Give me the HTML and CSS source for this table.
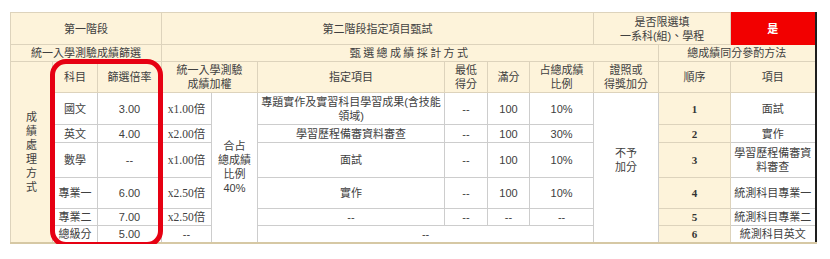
FILE: index.html
```html
<!DOCTYPE html>
<html lang="zh-Hant">
<head>
<meta charset="utf-8">
<title>甄選入學 評量方式</title>
<link rel="stylesheet" href="styles.css">
</head>
<body>
<div class="wrap">
  <table class="grid">
    <colgroup>
      <col class="w42"><col class="w45"><col class="w64"><col class="w50"><col class="w46"><col class="w187">
      <col class="w43"><col class="w42"><col class="w64"><col class="w65"><col class="w72"><col class="w85">
    </colgroup>
    <tr class="r1">
      <th colspan="3" class="hd">第一階段</th>
      <th colspan="6" class="hd">第二階段指定項目甄試</th>
      <th colspan="2" class="hd">是否限選填<br>一系科(組)、學程</th>
      <th class="yes">是</th>
    </tr>
    <tr class="r2">
      <th colspan="3" class="hd">統一入學測驗成績篩選</th>
      <th colspan="7" class="hd spaced">甄選總成績採計方式</th>
      <th colspan="2" class="hd">總成績同分參酌方法</th>
    </tr>
    <tr class="r3">
      <th rowspan="7" class="hd side">成<br>績<br>處<br>理<br>方<br>式</th>
      <th class="hd">科目</th>
      <th class="hd">篩選倍率</th>
      <th colspan="2" class="hd">統一入學測驗<br>成績加權</th>
      <th class="hd">指定項目</th>
      <th class="hd">最低<br>得分</th>
      <th class="hd">滿分</th>
      <th class="hd">占總成績<br>比例</th>
      <th class="hd">證照或<br>得獎加分</th>
      <th class="hd">順序</th>
      <th class="hd">項目</th>
    </tr>
    <tr class="d1">
      <td>國文</td><td>3.00</td><td class="serif">x1.00倍</td>
      <td rowspan="6">合占<br>總成績<br>比例<br>40%</td>
      <td class="nowrap">專題實作及實習科目學習成果(含技能<br>領域)</td>
      <td>--</td><td>100</td><td>10%</td>
      <td rowspan="6" class="lift">不予<br>加分</td>
      <td class="hd ord">1</td><td>面試</td>
    </tr>
    <tr class="d2">
      <td>英文</td><td>4.00</td><td class="serif">x2.00倍</td>
      <td>學習歷程備審資料審查</td>
      <td>--</td><td>100</td><td>30%</td>
      <td class="hd ord">2</td><td>實作</td>
    </tr>
    <tr class="d3">
      <td>數學</td><td>--</td><td class="serif">x1.00倍</td>
      <td>面試</td>
      <td>--</td><td>100</td><td>10%</td>
      <td class="hd ord">3</td><td>學習歷程備審資<br>料審查</td>
    </tr>
    <tr class="d4">
      <td>專業一</td><td>6.00</td><td class="serif">x2.50倍</td>
      <td>實作</td>
      <td>--</td><td>100</td><td>10%</td>
      <td class="hd ord">4</td><td>統測科目專業一</td>
    </tr>
    <tr class="d5">
      <td>專業二</td><td>7.00</td><td class="serif">x2.50倍</td>
      <td>--</td>
      <td>--</td><td>--</td><td>--</td>
      <td class="hd ord">5</td><td>統測科目專業二</td>
    </tr>
    <tr class="d6">
      <td>總級分</td><td>5.00</td><td>--</td>
      <td colspan="4">--</td>
      <td class="hd ord">6</td><td>統測科目英文</td>
    </tr>
  </table>
  <div class="mark"></div>
</div>
</body>
</html>
```
FILE: styles.css
```css
html, body {
  margin: 0;
  padding: 0;
  background: #ffffff;
}

body {
  font-family: "Liberation Sans", "Noto Sans CJK TC", sans-serif;
  font-size: 11px;
  color: #404040;
}

.wrap {
  position: relative;
  margin: 12px 0 0 10px;
  width: 806px;
}

.grid {
  border-collapse: collapse;
  table-layout: fixed;
  width: 806px;
  border-right: 2px solid #1e1e1e;
  border-bottom: 2px solid #d6c8a4;
}

.grid th,
.grid td {
  border: 1px solid #cdcdcd;
  padding: 0 2px;
  text-align: center;
  vertical-align: middle;
  line-height: 14px;
  font-weight: normal;
  background: #ffffff;
}

.grid .hd {
  background: #fdf3da;
  border-color: #ddd3bc;
}

.r1 th {
  border-top-color: #e2d9c2;
}

.grid .yes {
  background: #f20000;
  color: #ffffff;
  border-color: #f20000;
  font-weight: bold;
}

.grid .spaced {
  letter-spacing: 2.4px;
}

.grid .side {
  line-height: 14px;
}

.grid .serif {
  font-family: "Liberation Serif", "Noto Sans CJK TC", serif;
  font-size: 11.5px;
}

.grid .ord {
  font-family: "Liberation Serif", serif;
  font-weight: bold;
  font-size: 11px;
  color: #333333;
}

.grid .nowrap {
  white-space: nowrap;
}

.grid .lift {
  padding-bottom: 14px;
}

.w42 { width: 42px; }
.w45 { width: 45px; }
.w64 { width: 64px; }
.w50 { width: 50px; }
.w46 { width: 46px; }
.w187 { width: 187px; }
.w43 { width: 43px; }
.w72 { width: 72px; }
.w65 { width: 65px; }
.w85 { width: 85px; }

.r1 { height: 32px; }
.r2 { height: 17px; }
.r3 { height: 31px; }
.d1 { height: 32px; }
.d2 { height: 18px; }
.d3 { height: 35px; }
.d4 { height: 31px; }
.d5 { height: 17px; }
.d6 { height: 17px; }

.mark {
  position: absolute;
  left: 40px;
  top: 47px;
  width: 113px;
  height: 188px;
  box-sizing: border-box;
  border: 5px solid #e60012;
  border-radius: 16px;
  pointer-events: none;
}
```
